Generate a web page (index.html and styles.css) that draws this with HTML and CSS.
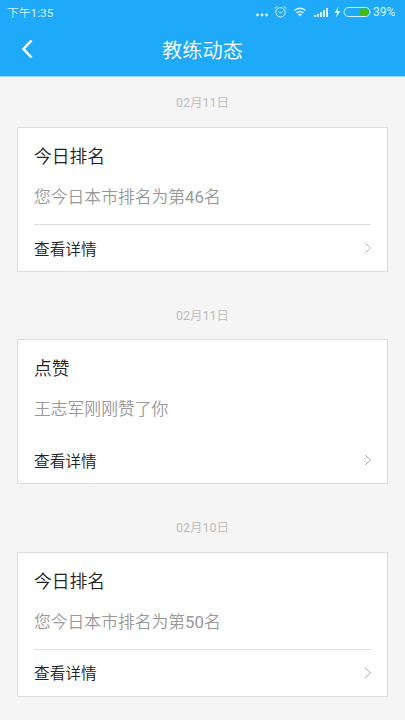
FILE: index.html
```html
<!DOCTYPE html>
<html lang="zh-CN">
<head>
<meta charset="utf-8">
<title>教练动态</title>
<link rel="stylesheet" href="styles.css">
</head>
<body>
<header class="top">
  <div class="status">
    <span class="time">下午<b>1:35</b></span>
    <svg class="indicators" width="118" height="22" viewBox="0 0 118 22" fill="none" stroke="#d4f3ff">
      <g fill="#d4f3ff" stroke="none"><circle cx="3.500" cy="14" r="1.400"/><circle cx="8" cy="14" r="1.400"/><circle cx="12.500" cy="14" r="1.400"/></g>
      <circle cx="26.500" cy="11.300" r="4.700"/><path d="m24.300 10.500 2.200 1.500 2.200-1.500M20.700 7.500l2.500-2M32.300 7.500l-2.500-2"/>
      <path d="M40.500 9.500q5.500-4.500 11 0M42.500 12q3.500-3 7 0" stroke-width="1.600"/><path d="m44 13.200 2 2.300 2-2.300q-2-1.400-4 0z" fill="#d4f3ff" stroke="none"/>
      <path d="M61 16v-2M64 16v-3M67 16v-5M70 16v-7M73 16V7" stroke-width="2"/>
      <path d="M84.500 5.500 80.500 12h2.500l-1 4.500 4.500-6.500h-3z" fill="#d4f3ff" stroke="none"/>
      <rect x="90" y="6.500" width="26" height="9" rx="4.500"/><path d="M106 7.500h5.500a3.500 3.500 0 0 1 0 7H106z" fill="#43bd16" stroke="none"/>
    </svg>
    <span class="percent"><b>39%</b></span>
  </div>
  <div class="nav">
    <svg class="back" width="14" height="20" viewBox="0 0 14 20"><path d="M11.500 1.500 3.500 10l8 8.500"/></svg>
    <h1>教练动态</h1>
  </div>
</header>
<main>
  <time><b>02</b>月<b>11</b>日</time>
  <section class="card"><h2>今日排名</h2><p>您今日本市排名为第<b>46</b>名</p><div class="more"><span>查看详情</span><svg width="8" height="12" viewBox="0 0 8 12"><path d="m1 1 5.500 5L1 11"/></svg></div></section>
  <time><b>02</b>月<b>11</b>日</time>
  <section class="card plain"><h2>点赞</h2><p>王志军刚刚赞了你</p><div class="more"><span>查看详情</span><svg width="8" height="12" viewBox="0 0 8 12"><path d="m1 1 5.500 5L1 11"/></svg></div></section>
  <time><b>02</b>月<b>10</b>日</time>
  <section class="card"><h2>今日排名</h2><p>您今日本市排名为第<b>50</b>名</p><div class="more"><span>查看详情</span><svg width="8" height="12" viewBox="0 0 8 12"><path d="m1 1 5.500 5L1 11"/></svg></div></section>
</main>
</body>
</html>
```
FILE: styles.css
```css
* { box-sizing: border-box; }
body { margin: 0; height: 720px; overflow: hidden; background: #f5f5f5; font-family: Roboto, "Noto Sans CJK SC", sans-serif; font-weight: 350; }
b { font-weight: 400; }
.top { height: 77px; background: #1eaaf8; color: #fff; border-bottom: 1px solid #9bd9f9; }
.status { height: 23px; display: flex; align-items: center; padding: 0 7px; font-size: 12px; color: #d4f3ff; }
.time { flex: 1; font-size: 11.800px; }
.percent { width: 26px; padding-left: 1px; }
.nav { height: 53px; display: grid; grid-template-columns: 50px 1fr 50px; align-items: center; }
.back { margin-left: 20px; margin-top: -1px; fill: none; stroke: #fff; stroke-width: 2.500; }
h1 { margin: 1px 0 0; padding-top: 1px; font-size: 20.200px; line-height: 30px; font-weight: 350; text-align: center; }
main { padding: 0 17px; }
time { display: block; height: 50px; line-height: 51px; text-align: center; font-size: 12.500px; color: #bdbdbd; }
.card { height: 145px; margin-bottom: 17.500px; padding: 15px 16px 0; border: 1px solid #dedede; background: #fff; }
.plain { margin-top: -.1px; }
h2 { margin: 0; font-size: 17.800px; line-height: 28px; font-weight: 350; color: #222; }
p { margin: 0; height: 53px; padding-top: 13px; font-size: 16.800px; line-height: 26px; color: #999; }
.more { height: 47px; border-top: 1px solid #dedede; display: flex; justify-content: space-between; align-items: center; font-size: 15.700px; color: #222; }
.plain .more { border-color: transparent; }
.more svg { margin-right: -1px; fill: none; stroke: #aaa; }
```
